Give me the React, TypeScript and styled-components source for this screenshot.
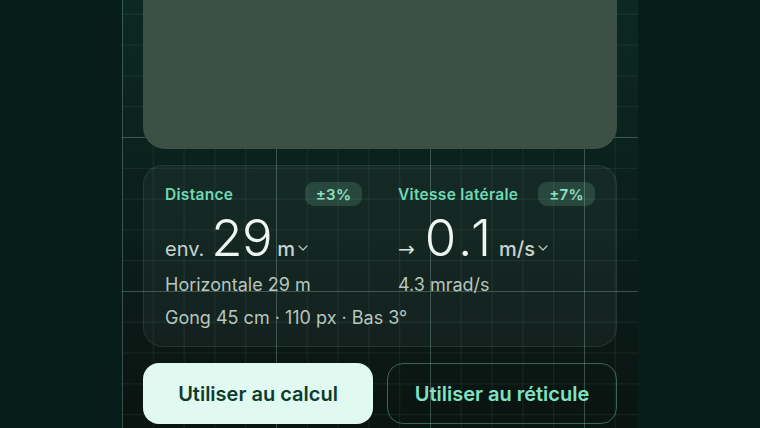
import React from 'react';
import styled, { createGlobalStyle } from 'styled-components';

const GlobalStyle = createGlobalStyle`
  html, body {
    margin: 0;
    padding: 0;
    background: #061d19;
    font-family: Inter, "Noto Sans", "Liberation Sans", sans-serif;
    -webkit-font-smoothing: antialiased;
  }
  * { box-sizing: border-box; }
`;

const Page = styled.div`
  width: 760px;
  height: 428px;
  overflow: hidden;
  display: flex;
  justify-content: center;
  background: #061d19;
`;

const Column = styled.div`
  width: 516px;
  height: 428px;
  padding: 0 21px;
  display: flex;
  flex-direction: column;
  gap: 16px;
  background-color: #0b201b;
  background-image:
    linear-gradient(90deg, rgba(150, 195, 180, 0.26) 1.5px, transparent 1.5px),
    linear-gradient(180deg, rgba(150, 195, 180, 0.26) 1.5px, transparent 1.5px),
    linear-gradient(90deg, rgba(130, 175, 160, 0.11) 1px, transparent 1px),
    linear-gradient(180deg, rgba(130, 175, 160, 0.11) 1px, transparent 1px),
    linear-gradient(180deg, #0c2822 0%, #0b1d19 60%, #0a1411 100%);
  background-size: 154px 154px, 154px 154px, 30.8px 30.8px, 30.8px 30.8px, 100% 100%;
  background-position: 0 0, 0 137px, 0 0, 0 13.8px, 0 0;
`;

const Preview = styled.div`
  flex: none;
  height: 179px;
  margin-top: -30px;
  border-radius: 22px;
  background: #3c5046;
`;

const StatsCard = styled.div`
  flex: none;
  height: 182px;
  padding: 16px 21px 0;
  border-radius: 20px;
  border: 1px solid rgba(200, 230, 220, 0.09);
  background: rgba(190, 225, 210, 0.05);
`;

const StatsGrid = styled.div`
  display: grid;
  grid-template-columns: 1fr 1fr;
  column-gap: 36px;
`;

const Stat = styled.div`
  display: flex;
  flex-direction: column;
`;

const StatHeader = styled.div`
  height: 24px;
  display: flex;
  align-items: center;
  justify-content: space-between;
`;

const Label = styled.span`
  font-size: 15.5px;
  font-weight: 600;
  letter-spacing: 0.3px;
  color: #6fd8b4;
`;

const Badge = styled.span`
  height: 24px;
  width: 57px;
  display: flex;
  align-items: center;
  justify-content: center;
  border-radius: 9px;
  background: rgba(120, 200, 172, 0.2);
  color: #8fe0c5;
  font-size: 15px;
  font-weight: 600;
  letter-spacing: 0.3px;
`;

const ValueRow = styled.div`
  margin-top: 5px;
  height: 54px;
  display: flex;
  align-items: baseline;
  white-space: nowrap;
`;

const Prefix = styled.span`
  font-size: 20px;
  color: #c5d5ce;
  margin-right: 7px;
`;

const Arrow = styled.span`
  font-size: 20px;
  color: #d6e3de;
  margin-right: 10px;
  font-family: "DejaVu Sans", sans-serif;
`;

const BigNumber = styled.span<{ $tracking?: number }>`
  font-size: 51px;
  line-height: 54px;
  font-weight: 300;
  letter-spacing: ${p => p.$tracking ?? -0.5}px;
  color: #eef6f2;
`;

const Unit = styled.span`
  font-size: 20px;
  font-weight: 500;
  color: #c5d5ce;
  margin-left: 5px;
`;

const Chevron = styled.svg`
  width: 10px;
  height: 6px;
  margin-left: 3px;
  align-self: center;
  margin-top: 20px;
`;

const SubText = styled.div<{ $gap?: number }>`
  margin-top: ${p => p.$gap ?? 9}px;
  font-size: 18px;
  line-height: 22px;
  color: #b6c6bf;
  white-space: nowrap;
`;

const Actions = styled.div`
  flex: none;
  display: grid;
  grid-template-columns: 1fr 1fr;
  gap: 14px;
`;

const ActionButton = styled.button<{ $primary?: boolean }>`
  height: 61px;
  border-radius: 16px;
  font-family: inherit;
  font-size: 20px;
  font-weight: 600;
  cursor: pointer;
  background: ${p => (p.$primary ? '#e0faf1' : 'transparent')};
  color: ${p => (p.$primary ? '#0f3a2f' : '#7fe3c3')};
  border: ${p => (p.$primary ? 'none' : '1.5px solid rgba(110, 200, 170, 0.45)')};
`;

const Caret = () => (
  <Chevron viewBox="0 0 10 6">
    <path d="M1 1l4 4 4-4" fill="none" stroke="#b6c6bf" strokeWidth="1.2" strokeLinecap="round" strokeLinejoin="round" />
  </Chevron>
);

export default function App() {
  return (
    <>
      <GlobalStyle />
      <Page>
        <Column>
          <Preview />
          <StatsCard>
            <StatsGrid>
              <Stat>
                <StatHeader>
                  <Label>Distance</Label>
                  <Badge>±3%</Badge>
                </StatHeader>
                <ValueRow>
                  <Prefix>env.</Prefix>
                  <BigNumber>29</BigNumber>
                  <Unit>m</Unit>
                  <Caret />
                </ValueRow>
                <SubText>Horizontale 29 m</SubText>
              </Stat>
              <Stat>
                <StatHeader>
                  <Label>Vitesse latérale</Label>
                  <Badge>±7%</Badge>
                </StatHeader>
                <ValueRow>
                  <Arrow>→</Arrow>
                  <BigNumber $tracking={3}>0.1</BigNumber>
                  <Unit>m/s</Unit>
                  <Caret />
                </ValueRow>
                <SubText>4.3 mrad/s</SubText>
              </Stat>
            </StatsGrid>
            <SubText $gap={11}>Gong 45 cm · 110 px · Bas 3°</SubText>
          </StatsCard>
          <Actions>
            <ActionButton $primary>Utiliser au calcul</ActionButton>
            <ActionButton>Utiliser au réticule</ActionButton>
          </Actions>
        </Column>
      </Page>
    </>
  );
}
